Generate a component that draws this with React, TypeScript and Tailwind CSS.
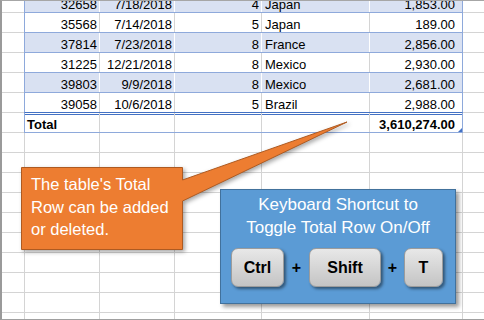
type Sale = { id: string; date: string; qty: string; country: string; amount: string };

const sales: Sale[] = [
  { id: "32658", date: "7/18/2018", qty: "4", country: "Japan", amount: "1,853.00" },
  { id: "35568", date: "7/14/2018", qty: "5", country: "Japan", amount: "189.00" },
  { id: "37814", date: "7/23/2018", qty: "8", country: "France", amount: "2,856.00" },
  { id: "31225", date: "12/21/2018", qty: "8", country: "Mexico", amount: "2,930.00" },
  { id: "39803", date: "9/9/2018", qty: "8", country: "Mexico", amount: "2,681.00" },
  { id: "39058", date: "10/6/2018", qty: "5", country: "Brazil", amount: "2,988.00" },
];

function SaleRow({ sale, index }: { sale: Sale; index: number }) {
  const banded = index % 2 === 0;
  const last = index === sales.length - 1;
  const sep = banded ? "border-r border-white" : "border-r border-[#d4d4d4]";
  const cell = "flex items-end shrink-0 h-full";

  return (
    <div className={`flex overflow-hidden ${index === 0 ? "h-[12px]" : "h-[20px]"}`}>
      <div className="w-[22px] shrink-0 border-b border-[#d4d4d4]" />
      <div
        className={`flex shrink-0 border-x border-b border-[#8ea9db] ${
          last ? "border-b-[#4472c4]" : ""
        } ${banded ? "bg-[#d9e1f2]" : "bg-white"}`}
      >
        <div className={`${cell} ${sep} w-[75px] justify-end pr-[2px]`}>{sale.id}</div>
        <div className={`${cell} ${sep} w-[75px] justify-end pr-[2px]`}>{sale.date}</div>
        <div className={`${cell} ${sep} w-[87px] justify-end pr-[2px]`}>{sale.qty}</div>
        <div className={`${cell} ${sep} w-[108px] pl-[3px]`}>{sale.country}</div>
        <div className={`${cell} w-[92px] justify-end pr-[7px]`}>{sale.amount}</div>
      </div>
      <div className="flex-1 border-b border-[#d4d4d4]" />
    </div>
  );
}

function TotalRow() {
  const cell = "flex items-end shrink-0 h-full border-r border-[#d4d4d4]";
  return (
    <div className="flex h-[20px]">
      <div className="w-[22px] shrink-0 border-b border-[#d4d4d4]" />
      <div className="flex shrink-0 border-x border-b border-[#8ea9db] bg-white shadow-[inset_0_1px_0_#fff,inset_0_2px_0_#4472c4] font-bold">
        <div className={`${cell} w-[75px] pl-[2px]`}>Total</div>
        <div className={`${cell} w-[75px]`} />
        <div className={`${cell} w-[87px]`} />
        <div className={`${cell} w-[108px]`} />
        <div className="relative flex items-end shrink-0 h-full w-[92px] justify-end pr-[7px]">
          3,610,274.00
          <svg className="absolute right-0 bottom-0" width="4" height="4" viewBox="0 0 4 4">
            <polygon points="4,0 4,4 0,4" fill="#4472c4" />
          </svg>
        </div>
      </div>
      <div className="flex-1 border-b border-[#d4d4d4]" />
    </div>
  );
}

function EmptyRow() {
  const cell = "shrink-0 h-full border-r border-b border-[#d4d4d4]";
  return (
    <div className="flex h-[20px] shrink-0">
      <div className={`${cell} w-[23px]`} />
      <div className={`${cell} w-[75px]`} />
      <div className={`${cell} w-[75px]`} />
      <div className={`${cell} w-[87px]`} />
      <div className={`${cell} w-[108px]`} />
      <div className={`${cell} w-[93px]`} />
      <div className="flex-1 border-b border-[#d4d4d4]" />
    </div>
  );
}

function Key({ label, width }: { label: string; width: string }) {
  return (
    <div
      className={`${width} h-[39px] shrink-0 flex items-center justify-center rounded-[7px] border border-[#9c9c9c] bg-gradient-to-b from-[#e8e8e8] to-[#c4c4c4] shadow-[2px_2px_3px_rgba(0,0,0,0.45)] text-[16px] font-bold text-black`}
    >
      {label}
    </div>
  );
}

function Plus({ width }: { width: string }) {
  return <div className={`${width} shrink-0 text-center text-[16px] font-bold text-black`}>+</div>;
}

export default function App() {
  return (
    <div className="relative w-[484px] h-[320px] overflow-hidden bg-white border-l-2 border-t border-b border-l-[#9a9a9a] border-t-[#a6a6a6] border-b-[#a0a0a0] font-['Liberation_Sans',Arial,sans-serif] text-[13px] leading-[15px] text-black">
      {sales.map((s, i) => (
        <SaleRow key={s.id} sale={s} index={i} />
      ))}
      <TotalRow />
      {Array.from({ length: 10 }, (_, i) => (
        <EmptyRow key={i} />
      ))}

      {/* orange callout with pointer to the total */}
      <svg
        className="absolute left-[-2px] top-[-1px] pointer-events-none drop-shadow-[2px_2px_2px_rgba(0,0,0,0.35)]"
        width="484"
        height="320"
        viewBox="0 0 484 320"
      >
        <path
          d="M21.5 167.5 H182.5 V180 L347 122 L182.5 201 V249.5 H21.5 Z"
          fill="#ed7d31"
          stroke="#ae5a21"
          strokeWidth="1"
          strokeLinejoin="miter"
        />
      </svg>
      <div className="absolute left-[20px] top-[167px] w-[160px] pl-[9px] pt-[5px] text-[16.5px] leading-[22.5px] text-white">
        The table's Total
        <br />
        Row can be added
        <br />
        or deleted.
      </div>

      {/* shortcut panel */}
      <div className="absolute left-[218px] top-[188px] w-[236px] h-[115px] border border-[#41719c] bg-[#5b9bd5] shadow-[3px_3px_4px_rgba(0,0,0,0.4)]">
        <div className="pt-[4px] text-center text-[17px] leading-[22.5px] text-white">
          Keyboard Shortcut to
          <br />
          Toggle Total Row On/Off
        </div>
        <div className="mt-[9px] flex items-center pl-[10px]">
          <Key label="Ctrl" width="w-[53px]" />
          <Plus width="w-[25px]" />
          <Key label="Shift" width="w-[72px]" />
          <Plus width="w-[23px]" />
          <Key label="T" width="w-[39px]" />
        </div>
      </div>
    </div>
  );
}
